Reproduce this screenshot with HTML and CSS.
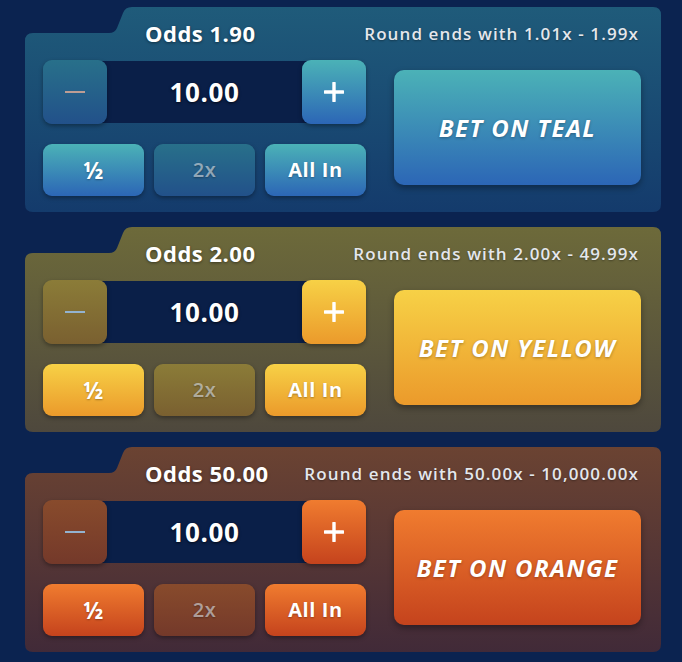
FILE: index.html
```html
<!DOCTYPE html>
<html lang="en">
<head>
    <meta charset="UTF-8">
    <meta name="viewport" content="width=device-width, initial-scale=1.0">
    <title>Color Bets</title>
    <link rel="stylesheet" href="styles.css">
</head>

<body>

    <main class="bets">

        <!-- Teal -->
        <section class="panel teal">
            <div class="panel-head">
                <h2 class="odds">Odds 1.90</h2>
                <p class="range">Round ends with 1.01x - 1.99x</p>
            </div>
            <div class="panel-body">
                <div class="controls">
                    <div class="stepper">
                        <button class="btn step off" aria-label="Decrease">
                            <svg width="20" height="4" viewBox="0 0 20 4"><line x1="0" y1="2" x2="20" y2="2" stroke-width="2"/></svg>
                        </button>
                        <div class="amount">10.00</div>
                        <button class="btn step" aria-label="Increase">
                            <svg width="20" height="20" viewBox="0 0 20 20"><path d="M10 1v18M1 10h18" stroke-width="3.4" stroke-linecap="round"/></svg>
                        </button>
                    </div>
                    <div class="quick">
                        <button class="btn half">½</button>
                        <button class="btn off">2x</button>
                        <button class="btn">All In</button>
                    </div>
                </div>
                <button class="bet">BET ON TEAL</button>
            </div>
        </section>

        <!-- Yellow -->
        <section class="panel yellow">
            <div class="panel-head">
                <h2 class="odds">Odds 2.00</h2>
                <p class="range">Round ends with 2.00x - 49.99x</p>
            </div>
            <div class="panel-body">
                <div class="controls">
                    <div class="stepper">
                        <button class="btn step off" aria-label="Decrease">
                            <svg width="20" height="4" viewBox="0 0 20 4"><line x1="0" y1="2" x2="20" y2="2" stroke-width="2"/></svg>
                        </button>
                        <div class="amount">10.00</div>
                        <button class="btn step" aria-label="Increase">
                            <svg width="20" height="20" viewBox="0 0 20 20"><path d="M10 1v18M1 10h18" stroke-width="3.4" stroke-linecap="round"/></svg>
                        </button>
                    </div>
                    <div class="quick">
                        <button class="btn half">½</button>
                        <button class="btn off">2x</button>
                        <button class="btn">All In</button>
                    </div>
                </div>
                <button class="bet">BET ON YELLOW</button>
            </div>
        </section>

        <!-- Orange -->
        <section class="panel orange">
            <div class="panel-head">
                <h2 class="odds">Odds 50.00</h2>
                <p class="range">Round ends with 50.00x - 10,000.00x</p>
            </div>
            <div class="panel-body">
                <div class="controls">
                    <div class="stepper">
                        <button class="btn step off" aria-label="Decrease">
                            <svg width="20" height="4" viewBox="0 0 20 4"><line x1="0" y1="2" x2="20" y2="2" stroke-width="2"/></svg>
                        </button>
                        <div class="amount">10.00</div>
                        <button class="btn step" aria-label="Increase">
                            <svg width="20" height="20" viewBox="0 0 20 20"><path d="M10 1v18M1 10h18" stroke-width="3.4" stroke-linecap="round"/></svg>
                        </button>
                    </div>
                    <div class="quick">
                        <button class="btn half">½</button>
                        <button class="btn off">2x</button>
                        <button class="btn">All In</button>
                    </div>
                </div>
                <button class="bet">BET ON ORANGE</button>
            </div>
        </section>

    </main>

</body>
</html>
```

FILE: styles.css
```css
/* Reset */
* { margin: 0; padding: 0; box-sizing: border-box; }

body {
    font-family: "Open Sans", Arial, sans-serif;
    background: #0b2350;
    color: #fff;
    overflow: hidden;
}

button {
    font-family: inherit;
    color: inherit;
    border: none;
    cursor: pointer;
}

/* Colour themes */
.teal {
    --panel-top: #1f5b7a;
    --panel-bot: #143b6c;
    --btn-top: #4bb2b7;
    --btn-bot: #2c66b6;
    --off-top: #28708a;
    --off-bot: #22518a;
    --minus: #bd9d94;
}

.yellow {
    --panel-top: #6d6a3a;
    --panel-bot: #4e483d;
    --btn-top: #f7d146;
    --btn-bot: #eb9a2b;
    --off-top: #8b7c38;
    --off-bot: #7a6030;
    --minus: #93b3d0;
}

.orange {
    --panel-top: #6b4332;
    --panel-bot: #412a38;
    --btn-top: #f07c2f;
    --btn-bot: #c5431d;
    --off-top: #884b2c;
    --off-bot: #74392a;
    --minus: #93b3d0;
}

/* Stack of panels */
.bets {
    display: flex;
    flex-direction: column;
    gap: 15px;
    padding: 7px 0 0 25px;
}

/* Panel with folder tab */
.panel {
    width: 636px;
    height: 205px;
    padding: 0 20px 16px 18px;
    display: flex;
    flex-direction: column;
    background: linear-gradient(var(--panel-top), var(--panel-bot));
    clip-path: path("M0,34 Q0,26 8,26 L84,26 Q90,26 92,21 L98,6 Q100,0 107,0 L628,0 Q636,0 636,8 L636,197 Q636,205 628,205 L8,205 Q0,205 0,197 Z");
}

.panel-head {
    height: 52px;
    display: flex;
    align-items: center;
    justify-content: space-between;
    padding: 0 2px 0 102px;
}

.odds {
    font-size: 22px;
    font-weight: 700;
    letter-spacing: 0.5px;
    text-shadow: 0 1px 3px rgba(0, 0, 0, 0.45);
}

.range {
    font-size: 17px;
    font-weight: 600;
    letter-spacing: 1.1px;
    color: #e4e7ec;
    text-shadow: 0 1px 2px rgba(0, 0, 0, 0.35);
}

.panel-body {
    flex: 1;
    display: flex;
    align-items: center;
    gap: 28px;
}

.controls {
    width: 323px;
    display: flex;
    flex-direction: column;
    gap: 20px;
}

/* Buttons */
.btn {
    position: relative;
    z-index: 1;
    height: 52px;
    border-radius: 9px;
    font-size: 20px;
    font-weight: 700;
    letter-spacing: 0.6px;
    background: linear-gradient(var(--btn-top), var(--btn-bot));
    box-shadow: 0 2px 4px rgba(0, 0, 0, 0.35);
    text-shadow: 0 1px 2px rgba(0, 0, 0, 0.3);
}

.btn.half { font-size: 23px; }

.btn.off {
    background: linear-gradient(var(--off-top), var(--off-bot));
    color: rgba(225, 230, 235, 0.6);
    font-weight: 600;
}

/* Amount stepper */
.stepper {
    display: flex;
    align-items: center;
}

.step {
    width: 64px;
    height: 64px;
    flex: none;
    display: flex;
    align-items: center;
    justify-content: center;
}

.step svg { stroke: #fff; }
.step.off svg { stroke: var(--minus); }

.amount {
    flex: 1;
    height: 62px;
    margin: 0 -6px;
    background: #0a1f48;
    display: flex;
    align-items: center;
    justify-content: center;
    font-size: 26px;
    font-weight: 700;
    letter-spacing: 0.6px;
    text-shadow: 0 1px 3px rgba(0, 0, 0, 0.7);
}

.quick {
    display: grid;
    grid-template-columns: repeat(3, 1fr);
    gap: 10px;
}

/* Big bet button */
.bet {
    width: 247px;
    height: 115px;
    border-radius: 10px;
    font-size: 24px;
    font-weight: 700;
    font-style: italic;
    letter-spacing: 1.4px;
    background: linear-gradient(var(--btn-top), var(--btn-bot));
    box-shadow: 0 3px 6px rgba(0, 0, 0, 0.35);
    text-shadow: 0 1px 3px rgba(0, 0, 0, 0.3);
}
```
